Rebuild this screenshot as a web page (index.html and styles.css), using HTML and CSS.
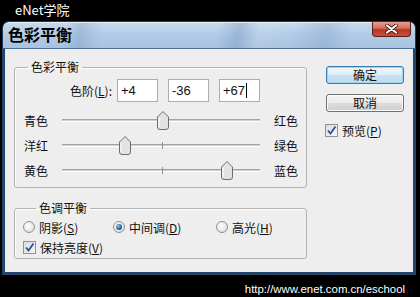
FILE: index.html
```html
<!DOCTYPE html>
<html>
<head>
<meta charset="utf-8">
<link rel="stylesheet" href="styles.css">
</head>
<body>
<div class="top">eNet学院</div>
<div class="dialog">
  <div class="titlebar">
    <span class="title">色彩平衡</span>
    <span class="close"><svg width="15" height="10" viewBox="0 0 15 10"><path d="M3 1.5 L12 8.5 M12 1.5 L3 8.5" stroke="#3a1410" stroke-width="3.6" stroke-linecap="round"/><path d="M3 1.5 L12 8.5 M12 1.5 L3 8.5" stroke="#fff" stroke-width="2.2" stroke-linecap="round"/></svg></span>
  </div>
  <div class="body">
    <div class="left">
      <fieldset class="group g1">
        <legend>色彩平衡</legend>
        <div class="levels">
          <span class="lvl-label">色阶(<u>L</u>):</span>
          <span class="field">+4</span>
          <span class="field">-36</span>
          <span class="field">+67<i class="caret"></i></span>
        </div>
        <div class="srow">
          <span class="sl">青色</span>
          <span class="track"><i class="tick"></i><svg class="thumb" style="left:95px" width="12" height="19" viewBox="0 0 12 19"><path d="M0.5 6 L6 0.5 L11.5 6 L11.5 16 Q11.5 18.5 9 18.5 L3 18.5 Q0.5 18.5 0.5 16 Z" fill="#e2e2e2" stroke="#6e6e6e"/><path d="M2 7 L2 16" stroke="#fff"/></svg></span>
          <span class="sr">红色</span>
        </div>
        <div class="srow">
          <span class="sl">洋红</span>
          <span class="track"><i class="tick"></i><svg class="thumb" style="left:57px" width="12" height="19" viewBox="0 0 12 19"><path d="M0.5 6 L6 0.5 L11.5 6 L11.5 16 Q11.5 18.5 9 18.5 L3 18.5 Q0.5 18.5 0.5 16 Z" fill="#e2e2e2" stroke="#6e6e6e"/><path d="M2 7 L2 16" stroke="#fff"/></svg></span>
          <span class="sr">绿色</span>
        </div>
        <div class="srow">
          <span class="sl">黄色</span>
          <span class="track"><i class="tick"></i><svg class="thumb" style="left:159px" width="12" height="19" viewBox="0 0 12 19"><path d="M0.5 6 L6 0.5 L11.5 6 L11.5 16 Q11.5 18.5 9 18.5 L3 18.5 Q0.5 18.5 0.5 16 Z" fill="#e2e2e2" stroke="#6e6e6e"/><path d="M2 7 L2 16" stroke="#fff"/></svg></span>
          <span class="sr">蓝色</span>
        </div>
      </fieldset>
      <fieldset class="group g2">
        <legend>色调平衡</legend>
        <div class="radios">
          <span class="opt o1"><i class="radio"></i>阴影(<u>S</u>)</span>
          <span class="opt o2"><i class="radio on"></i>中间调(<u>D</u>)</span>
          <span class="opt"><i class="radio"></i>高光(<u>H</u>)</span>
        </div>
        <div class="chkrow"><i class="check"><svg width="11" height="11" viewBox="0 0 11 11"><path d="M2 5.5 L4.5 8.5 L9.5 1.5" fill="none" stroke="#2d4f9e" stroke-width="1.8"/></svg></i>保持亮度(<u>V</u>)</div>
      </fieldset>
    </div>
    <div class="right">
      <div class="btn default">确定</div>
      <div class="btn">取消</div>
      <div class="chkrow preview"><i class="check"><svg width="11" height="11" viewBox="0 0 11 11"><path d="M2 5.5 L4.5 8.5 L9.5 1.5" fill="none" stroke="#2d4f9e" stroke-width="1.8"/></svg></i>预览(<u>P</u>)</div>
    </div>
  </div>
</div>
<div class="url">http://www.enet.com.cn/eschool</div>
</body>
</html>
```
FILE: styles.css
```css
html, body {
  margin: 0;
  padding: 0;
}
body {
  background: #000;
  width: 420px;
  height: 297px;
  overflow: hidden;
  font-family: "Noto Sans CJK SC", "Liberation Sans", sans-serif;
  font-size: 12px;
  color: #111;
}
.top {
  height: 21px;
  padding-left: 15px;
  color: #fff;
  font-size: 13px;
  line-height: 19px;
}
.dialog {
  margin-left: 2px;
  width: 414px;
}
.titlebar {
  height: 26px;
  border: 1px solid #1f3a58;
  border-bottom: none;
  border-radius: 7px 7px 0 0;
  display: flex;
  justify-content: space-between;
  align-items: flex-start;
  background:
    linear-gradient(100deg, rgba(255,255,255,0) 15%, rgba(120,150,190,0.35) 19%, rgba(255,255,255,0) 24%, rgba(255,255,255,0) 52%, rgba(110,140,185,0.35) 57%, rgba(255,255,255,0.1) 62%, rgba(255,255,255,0) 70%, rgba(120,150,190,0.3) 78%, rgba(255,255,255,0) 84%),
    linear-gradient(180deg, #c9dcef 0%, #b3cce6 45%, #a7c3e0 100%);
  box-shadow: inset 0 1px 0 #e6f0fa;
}
.title {
  font-size: 16px;
  font-weight: bold;
  line-height: 24px;
  padding-left: 5px;
  color: #000;
}
.close {
  width: 37px;
  height: 14px;
  margin-right: 4px;
  border: 1px solid #5e1f18;
  border-top: none;
  border-radius: 0 0 4px 4px;
  background: linear-gradient(180deg, #e6a194 0%, #d36b5a 45%, #bb3522 55%, #c4513c 100%);
  display: flex;
  align-items: center;
  justify-content: center;
}
.body {
  height: 212px;
  background: #eeeeee;
  border: 3px solid #23456a;
  border-top: 1px solid #4d6f94;
  display: flex;
  padding: 11px 0 0 9px;
  box-sizing: content-box;
}
.left {
  width: 293px;
}
.group {
  margin: 0;
  padding: 0;
  border: 1px solid #b2b2b2;
  border-radius: 3px;
  min-width: 0;
  box-shadow: 1px 1px 0 #fff inset;
}
.group legend {
  margin-left: 13px;
  padding: 0 3px;
  line-height: 14px;
  font-size: 12px;
}
.g1 {
  padding-bottom: 4px;
}
.levels {
  display: flex;
  align-items: center;
  margin-top: 5px;
  gap: 10px;
}
.lvl-label {
  width: 97px;
  text-align: right;
  margin-right: -5px;
}
.field {
  height: 21px;
  border: 1px solid #a9aeb5;
  background: #fff;
  font-family: "Liberation Sans", sans-serif;
  font-size: 13px;
  line-height: 21px;
  padding-left: 3px;
  box-sizing: content-box;
  width: 36px;
  display: flex;
  align-items: center;
}
.caret {
  display: inline-block;
  width: 1px;
  height: 15px;
  background: #000;
  margin-left: 1px;
}
.srow {
  display: flex;
  align-items: center;
  height: 25px;
  padding-left: 9px;
}
.levels + .srow {
  margin-top: 6px;
}
.sl {
  width: 38px;
}
.sr {
  margin-left: 14px;
}
.track {
  position: relative;
  width: 198px;
  height: 1px;
  background: #cfcfcf;
  border-top: 1px solid #a3a3a3;
  border-bottom: 1px solid #ffffff;
}
.tick {
  position: absolute;
  left: 100px;
  top: -3px;
  width: 1px;
  height: 7px;
  background: #8f8f8f;
}
.thumb {
  position: absolute;
  top: -9px;
}
.g2 {
  margin-top: 13px;
  padding: 2px 0 1px 8px;
}
.radios {
  display: flex;
  align-items: center;
  height: 20px;
}
.opt {
  display: flex;
  align-items: center;
}
.o1 { width: 90px; }
.o2 { width: 103px; }
.radio {
  width: 10px;
  height: 10px;
  border: 1px solid #8d9399;
  border-radius: 50%;
  background: radial-gradient(circle at 40% 40%, #ffffff 0%, #e2e2e2 70%, #d0d0d0 100%);
  margin-right: 4px;
  position: relative;
  display: inline-block;
}
.radio.on::after {
  content: "";
  position: absolute;
  left: 2px;
  top: 2px;
  width: 6px;
  height: 6px;
  border-radius: 50%;
  background: radial-gradient(circle at 35% 35%, #9ec7e8 0%, #2f6ea8 50%, #10335a 100%);
}
.chkrow {
  display: flex;
  align-items: center;
  height: 20px;
}
.check {
  width: 11px;
  height: 11px;
  border: 1px solid #8e9398;
  background: linear-gradient(135deg, #dcdcdc 0%, #f6f6f6 100%);
  margin-right: 4px;
  display: inline-flex;
  align-items: center;
  justify-content: center;
}
.right {
  margin-left: 19px;
  padding-top: 6px;
  width: 80px;
}
.btn {
  width: 76px;
  height: 16px;
  border: 1px solid #707070;
  border-radius: 3px;
  background: linear-gradient(180deg, #f4f4f4 0%, #ebebeb 48%, #dcdcdc 52%, #cfcfcf 100%);
  text-align: center;
  line-height: 16px;
  font-size: 12px;
  margin-bottom: 10px;
  box-shadow: inset 0 0 0 1px #fbfbfb;
}
.btn.default {
  border-color: #3b7cb0;
  box-shadow: inset 0 0 0 1px #9fd3f0;
  background: linear-gradient(180deg, #eef6fb 0%, #dfeef8 48%, #c8e1f3 52%, #bfdcef 100%);
}
.preview {
  margin-left: -1px;
  margin-top: -2px;
}
.url {
  color: #fff;
  font-family: "Liberation Sans", sans-serif;
  font-size: 11.4px;
  line-height: 14px;
  text-align: right;
  padding-right: 15px;
  margin-top: 7px;
}
```
